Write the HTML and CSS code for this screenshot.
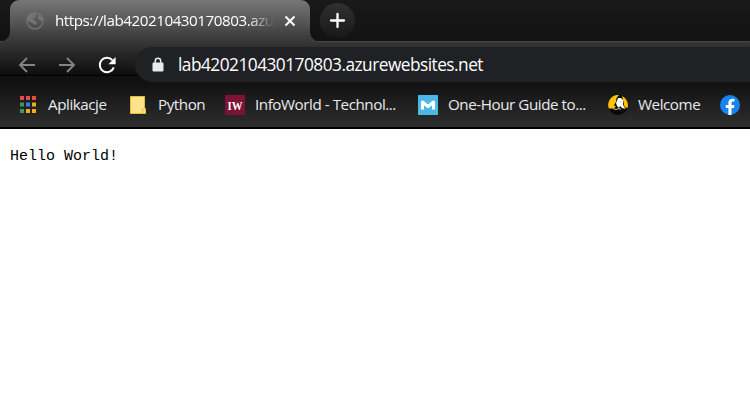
FILE: index.html
```
<!DOCTYPE html>
<html lang="pl">
<head>
<meta charset="utf-8">
<title>lab420210430170803.azurewebsites.net</title>
<link rel="stylesheet" href="styles.css">
</head>
<body>
<header class="browser">
  <div class="tabstrip">
    <div class="tab">
      <svg class="globe" width="18" height="18" viewBox="0 0 18 18"><circle cx="9" cy="9" r="8" fill="none" stroke="#77797c" stroke-width="1.6"/><path d="M2 5l3-3 5 0 0 2-2 2-1 2 3 1 1 2-2 2-3-2-4-2zM12 3l4 3 0 3-3-1-1-2z" fill="#77797c"/></svg>
      <span class="tab-title">https://lab420210430170803.azur</span>
      <svg class="close" width="12" height="12" viewBox="0 0 12 12"><path d="M1.5 1.5l9 9m0-9l-9 9" stroke="#fff" stroke-width="2"/></svg>
    </div>
    <div class="new-tab"><svg width="17" height="17" viewBox="0 0 17 17"><path d="M8.5 2v13M2 8.5h13" stroke="#fff" stroke-width="2.3" stroke-linecap="round"/></svg></div>
  </div>
  <div class="toolbar">
    <svg class="nav" width="18" height="18" viewBox="0 0 18 18"><path d="M17 9H2M9 2L2 9l7 7" fill="none" stroke="#858585" stroke-width="1.8"/></svg>
    <svg class="nav" width="18" height="18" viewBox="0 0 18 18"><path d="M1 9h15M9 2l7 7-7 7" fill="none" stroke="#858585" stroke-width="1.8"/></svg>
    <svg class="nav" width="18" height="18" viewBox="0 0 18 18"><path d="M15.8 11.3A7.2 7.2 0 1 1 14.4 4.2" fill="none" stroke="#fff" stroke-width="2"/><path d="M17.6 1v7.2h-7.2z" fill="#fff"/></svg>
    <div class="address">
      <svg width="12" height="16" viewBox="0 0 12 16"><path d="M3.3 6V4a2.7 2.7 0 0 1 5.4 0v2" fill="none" stroke="#e8eaed" stroke-width="1.5"/><rect x=".5" y="5.5" width="11" height="9" rx="1.2" fill="#e8eaed"/></svg>
      <span class="url">lab420210430170803.azurewebsites.net</span>
    </div>
  </div>
  <nav class="bookmarks">
    <div class="bookmark"><svg class="bookmark-icon" viewBox="0 0 20 20"><path d="M2 1h4v4H2zM8 1h4v4H8zM14 1h4v4h-4z" fill="#e94b42"/><path d="M2 7.500h4v4H2zM2 14h4v4H2z" fill="#3b9c5a"/><path d="M8 7.500h4v4H8z" fill="#2f7de9"/><path d="M8 14h4v4H8zM14 7.500h4v4h-4zM14 14h4v4h-4z" fill="#f0ac1c"/></svg><span class="label">Aplikacje</span></div>
    <div class="bookmark"><svg class="bookmark-icon" viewBox="0 0 20 20"><path d="M2.5 1.5h14v12h1v5h-15z" fill="#ffe28a" stroke="#e5bb3c"/><path d="M14.5 18.5v-4l3-1" fill="none" stroke="#e5bb3c"/></svg><span class="label">Python</span></div>
    <div class="bookmark"><svg class="bookmark-icon" viewBox="0 0 20 20"><path d="M0 0h20v20H0z" fill="#7c1235"/><text class="iw" x="10" y="14.5" text-anchor="middle" textLength="15" lengthAdjust="spacingAndGlyphs">IW</text></svg><span class="label">InfoWorld - Technol...</span></div>
    <div class="bookmark"><svg class="bookmark-icon" viewBox="0 0 20 20"><path d="M0 0h20v20H0z" fill="#4db7e5"/><path d="M4.5 14.5V7l5.5 4.5L15.500 7v7.500" fill="none" stroke="#fff" stroke-width="3" stroke-linejoin="round"/></svg><span class="label">One-Hour Guide to...</span></div>
    <div class="bookmark"><svg class="bookmark-icon" viewBox="0 0 20 20"><circle cx="10" cy="10" r="10" fill="#080808"/><path d="M.8 13.500A10 10 0 0 1 11 0Q7.500 3 8 7L6 10l2 2-3 1.500zM14 1a10 10 0 0 1 5.500 12l-3-1-1-5z" fill="#fec20b"/><path d="M10 3l3 0 2 2 0 4 1 3 2 2-4-1-2-2-1 2-2-2-1-3z" fill="#fff"/><path d="M5 13.500l3 1 3-1 2 1M12 6l1 2" fill="none" stroke="#e0c68b"/></svg><span class="label">Welcome</span></div>
    <div class="bookmark"><svg class="bookmark-icon" viewBox="0 0 20 20"><circle cx="10" cy="10" r="10" fill="#1584ed"/><path d="M8.400 20v-7H5.800v-3h2.600V7.800c0-2.700 1.600-4.100 4-4.100l2.100.2v2.500h-1.300c-1.300 0-1.700.7-1.700 1.600v2h2.900l-.5 3h-2.400v7z" fill="#fff"/></svg></div>
  </nav>
</header>
<main><pre>Hello World!</pre></main>
</body>
</html>
```
FILE: styles.css
```
* { box-sizing: border-box; }
body { margin: 0; background: #fff; font-family: "Open Sans", "Noto Sans", sans-serif; overflow: hidden; }
svg { display: block; flex: none; }
.browser { height: 129px; background: #111; border-bottom: 2px solid #000; white-space: nowrap; }
.tabstrip { display: flex; height: 42px; padding-left: 10px; background: linear-gradient(#191919, #121212); box-shadow: inset 0 -1px #484848; }
.tab { position: relative; display: flex; align-items: center; width: 300px; height: 42px; padding-left: 16px; background: linear-gradient(#777, #363636); border-radius: 9px 9px 0 0; color: #fff; }
.tab::before, .tab::after { content: ""; position: absolute; bottom: 0; width: 10px; height: 10px; }
.tab::before { left: -10px; background: radial-gradient(circle at 0 0, transparent 9.5px, #3b3b3b 10px); }
.tab::after { right: -10px; background: radial-gradient(circle at 100% 0, transparent 9.5px, #3b3b3b 10px); }
.tab-title { width: 219px; margin: -2px 0 0 11px; font-size: 15.2px; letter-spacing: -.46px; -webkit-mask-image: linear-gradient(90deg, #000 88%, transparent); mask-image: linear-gradient(90deg, #000 88%, transparent); }
.close { margin-left: 10px; }
.globe { opacity: .8; }
.new-tab { display: grid; place-items: center; width: 35px; height: 35px; margin: 3px 0 0 10px; border-radius: 50%; background: linear-gradient(#303030, #181818); }
.toolbar { display: flex; align-items: center; height: 40px; padding: 5px 0 0 18px; background: linear-gradient(#363636, #0d0d0d 33px, #000 33px, #000 34px, #111 34px, #101010); }
.nav { margin-right: 22px; }
.address { display: flex; align-items: center; flex: 1; height: 35px; margin-left: -3px; padding-left: 17px; background: #202124; border-radius: 18px 0 0 18px; color: #fff; }
.url { margin: 0 0 0 14px; font-size: 17.3px; letter-spacing: -.52px; }
.bookmarks { display: grid; grid-template-columns: 110px 97px 193px 190px 112px 30px; height: 45px; padding-left: 18px; align-items: center; background: linear-gradient(#111, #2e2e2e); color: #e8eaed; font-size: 15.2px; }
.bookmark { display: flex; align-items: center; height: 24px; gap: 10px; }
.bookmark-icon { width: 20px; height: 20px; }
.iw { font: bold 12px "Liberation Serif", serif; fill: #fff; }
.label { margin-top: -2px; letter-spacing: -.45px; }
main { padding: 18px 10px; }
pre { margin: 0; font: 15px/20px "Liberation Mono", monospace; color: #000; }
```
